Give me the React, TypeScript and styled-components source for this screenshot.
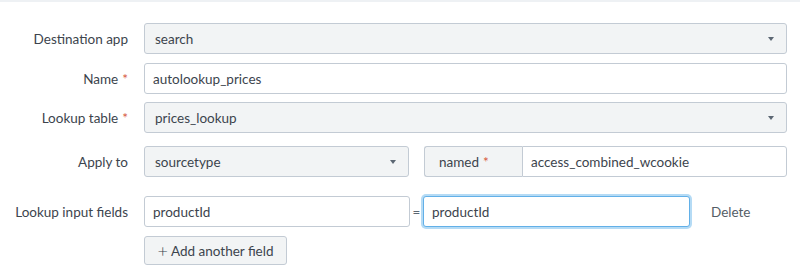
import React from "react";
import styled, { createGlobalStyle } from "styled-components";

const Global = createGlobalStyle`
  html, body { margin: 0; padding: 0; background: #fff; }
  body { font-family: "Lato", "Liberation Sans", Arial, sans-serif; color: #3c444d; }
  * { box-sizing: border-box; }
`;

const Page = styled.div`
  width: 800px;
  height: 280px;
  border-top: 2px solid #eef1f4;
  padding-top: 21px;
`;

const Form = styled.div`
  display: flex;
  flex-direction: column;
`;

const Row = styled.div<{ $top?: number }>`
  display: grid;
  grid-template-columns: 128px 643px;
  column-gap: 16px;
  align-items: center;
  margin-top: ${(p) => p.$top ?? 0}px;
`;

const Label = styled.div`
  text-align: right;
  font-size: 13.5px;
  color: #3c444d;
  white-space: nowrap;
`;

const Req = styled.span`
  color: #d6563c;
  margin-left: 4px;
`;

const Select = styled.div<{ $width?: number }>`
  height: 31px;
  width: ${(p) => (p.$width ? `${p.$width}px` : "100%")};
  background: #f2f4f5;
  border: 1px solid #c3cbd4;
  border-radius: 3px;
  display: flex;
  align-items: center;
  justify-content: space-between;
  padding: 0 12px 0 10px;
  font-size: 13.5px;
  color: #3c444d;
`;

const Caret = styled.span`
  width: 0;
  height: 0;
  border-left: 3.5px solid transparent;
  border-right: 3.5px solid transparent;
  border-top: 4px solid #5c6773;
`;

const TextInput = styled.div<{ $width?: number; $focus?: boolean }>`
  height: 31px;
  width: ${(p) => (p.$width ? `${p.$width}px` : "100%")};
  background: #fff;
  border: 1px solid ${(p) => (p.$focus ? "#62b0e8" : "#c3cbd4")};
  box-shadow: ${(p) => (p.$focus ? "0 0 0 2px #b5dbf5" : "none")};
  border-radius: 3px;
  display: flex;
  align-items: center;
  padding: 0 8px;
  font-size: 13.5px;
  color: #3c444d;
  flex: ${(p) => (p.$width ? "none" : "1")};
`;

const Inline = styled.div`
  display: flex;
  align-items: center;
`;

const Group = styled.div`
  display: flex;
  margin-left: 15px;
  flex: 1;
  height: 31px;
`;

const Addon = styled.div`
  width: 98px;
  background: #f2f4f5;
  border: 1px solid #c3cbd4;
  border-right: none;
  border-radius: 3px 0 0 3px;
  display: flex;
  align-items: center;
  padding-left: 14px;
  font-size: 13.5px;
`;

const GroupInput = styled.div`
  flex: 1;
  border: 1px solid #c3cbd4;
  border-radius: 0 3px 3px 0;
  display: flex;
  align-items: center;
  padding-left: 8px;
  font-size: 13.5px;
`;

const Equals = styled.span`
  width: 13px;
  text-align: center;
  font-size: 13.5px;
  color: #5c6773;
`;

const DeleteLink = styled.span`
  margin-left: 21px;
  font-size: 13.5px;
  color: #545d66;
`;

const Button = styled.div`
  height: 29px;
  width: 143px;
  background: #f2f4f5;
  border: 1px solid #c3cbd4;
  border-radius: 3px;
  display: flex;
  align-items: center;
  justify-content: center;
  font-size: 13.5px;
  color: #3c444d;
  gap: 3px;
`;

const Plus = styled.span`
  font-size: 18px;
  font-weight: 300;
  line-height: 1;
  margin-top: -2px;
`;

export default function App() {
  return (
    <Page>
      <Global />
      <Form>
        <Row>
          <Label>Destination app</Label>
          <Select>
            <span>search</span>
            <Caret />
          </Select>
        </Row>
        <Row $top={9}>
          <Label>
            Name<Req>*</Req>
          </Label>
          <TextInput>autolookup_prices</TextInput>
        </Row>
        <Row $top={8}>
          <Label>
            Lookup table<Req>*</Req>
          </Label>
          <Select>
            <span>prices_lookup</span>
            <Caret />
          </Select>
        </Row>
        <Row $top={13}>
          <Label>Apply to</Label>
          <Inline>
            <Select $width={265}>
              <span>sourcetype</span>
              <Caret />
            </Select>
            <Group>
              <Addon>
                named<Req>*</Req>
              </Addon>
              <GroupInput>access_combined_wcookie</GroupInput>
            </Group>
          </Inline>
        </Row>
        <Row $top={19}>
          <Label>Lookup input fields</Label>
          <Inline>
            <TextInput $width={266}>productId</TextInput>
            <Equals>=</Equals>
            <TextInput $width={267} $focus>
              productId
            </TextInput>
            <DeleteLink>Delete</DeleteLink>
          </Inline>
        </Row>
        <Row $top={9}>
          <div />
          <Inline>
            <Button>
              <Plus>+</Plus>Add another field
            </Button>
          </Inline>
        </Row>
      </Form>
    </Page>
  );
}
